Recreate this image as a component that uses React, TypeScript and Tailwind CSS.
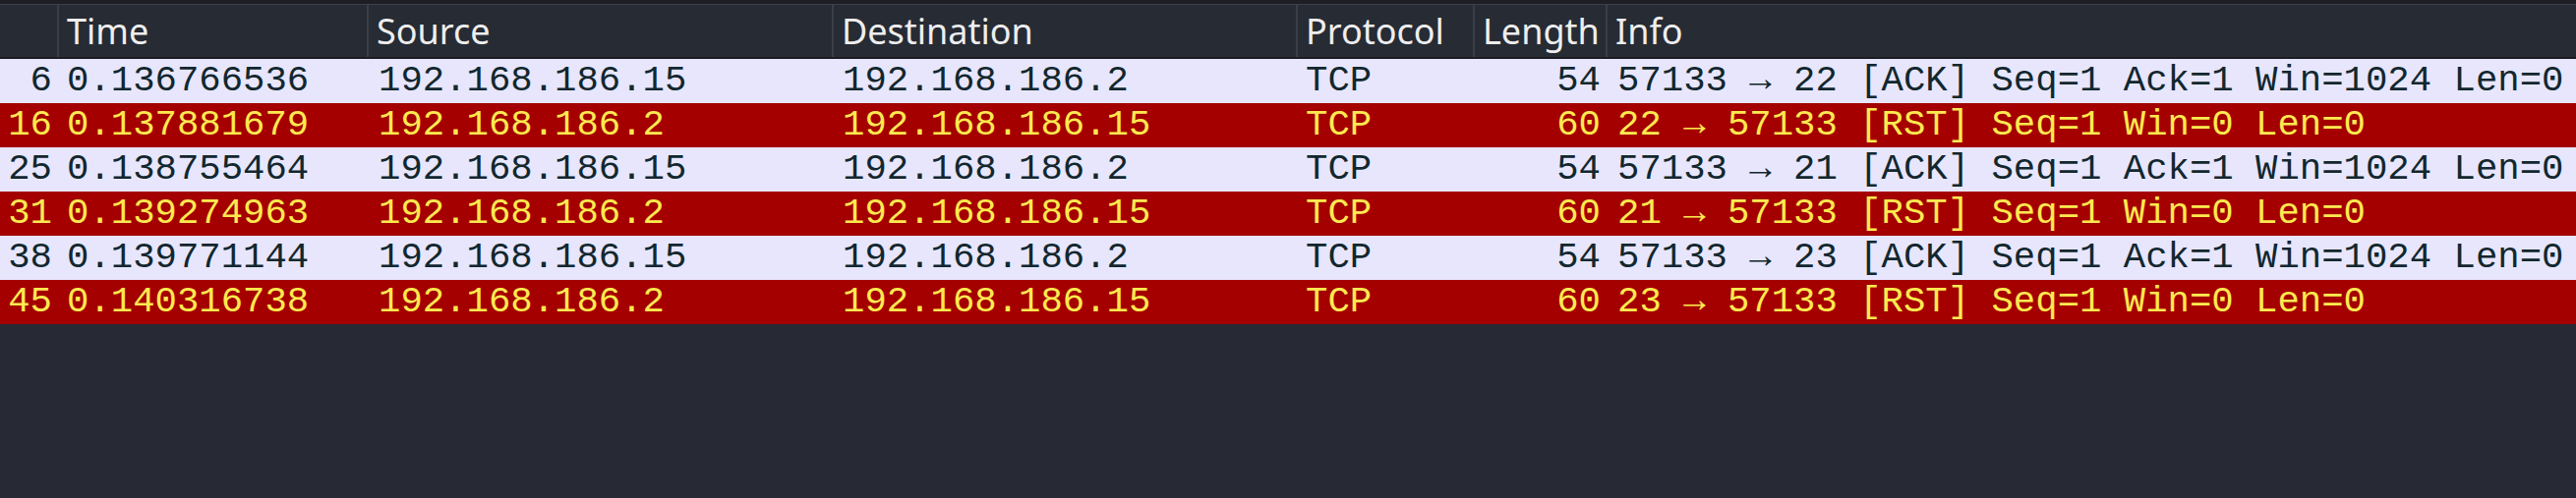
import React from 'react';

interface Packet {
    no: number;
    time: string;
    source: string;
    destination: string;
    protocol: string;
    length: number;
    info: string;
    rst: boolean;
}

const packets: Packet[] = [
    { no: 6, time: '0.136766536', source: '192.168.186.15', destination: '192.168.186.2', protocol: 'TCP', length: 54, info: '57133 → 22 [ACK] Seq=1 Ack=1 Win=1024 Len=0', rst: false },
    { no: 16, time: '0.137881679', source: '192.168.186.2', destination: '192.168.186.15', protocol: 'TCP', length: 60, info: '22 → 57133 [RST] Seq=1 Win=0 Len=0', rst: true },
    { no: 25, time: '0.138755464', source: '192.168.186.15', destination: '192.168.186.2', protocol: 'TCP', length: 54, info: '57133 → 21 [ACK] Seq=1 Ack=1 Win=1024 Len=0', rst: false },
    { no: 31, time: '0.139274963', source: '192.168.186.2', destination: '192.168.186.15', protocol: 'TCP', length: 60, info: '21 → 57133 [RST] Seq=1 Win=0 Len=0', rst: true },
    { no: 38, time: '0.139771144', source: '192.168.186.15', destination: '192.168.186.2', protocol: 'TCP', length: 54, info: '57133 → 23 [ACK] Seq=1 Ack=1 Win=1024 Len=0', rst: false },
    { no: 45, time: '0.140316738', source: '192.168.186.2', destination: '192.168.186.15', protocol: 'TCP', length: 60, info: '23 → 57133 [RST] Seq=1 Win=0 Len=0', rst: true },
];

const cols = 'grid grid-cols-[58px_315px_473px_472px_180px_135px_1fr]';
const headers = ['Time', 'Source', 'Destination', 'Protocol', 'Length', 'Info'];

const App = () => {
    return (
        <div className="min-h-screen w-full bg-[#272a35] overflow-hidden">
            <div className="h-[4px] bg-[#1d1f25]"></div>
            <div className="h-[1px] bg-[#3c4049]"></div>
            {/* header */}
            <div className={`${cols} h-[53px] bg-[#272b34] text-[36px] leading-[53px] text-[#eeeeee] font-['Noto_Sans',sans-serif]`}>
                <div></div>
                {headers.map((h) => (
                    <div key={h} className="border-l-2 border-[#3a3e48] pl-[8px] whitespace-nowrap overflow-hidden">
                        {h}
                    </div>
                ))}
            </div>
            <div className="h-[2px] bg-[#1a1c21]"></div>

            {/* rows */}
            <div className="font-['Liberation_Mono',monospace] text-[37.3px] leading-[45px]">
                {packets.map((p) => (
                    <div
                        key={p.no}
                        className={`${cols} h-[45px] whitespace-nowrap ${p.rst ? 'bg-[#a40000] text-[#fce94f]' : 'bg-[#e7e6fd] text-[#12272e]'}`}
                    >
                        <div className="text-right pr-[5px]">{p.no}</div>
                        <div className="pl-[10px]">{p.time}</div>
                        <div className="pl-[12px]">{p.source}</div>
                        <div className="pl-[11px]">{p.destination}</div>
                        <div className="pl-[10px]">{p.protocol}</div>
                        <div className="text-right pr-[5px]">{p.length}</div>
                        <div className="pl-[12px] overflow-hidden">{p.info}</div>
                    </div>
                ))}
            </div>
        </div>
    );
};

export default App;
